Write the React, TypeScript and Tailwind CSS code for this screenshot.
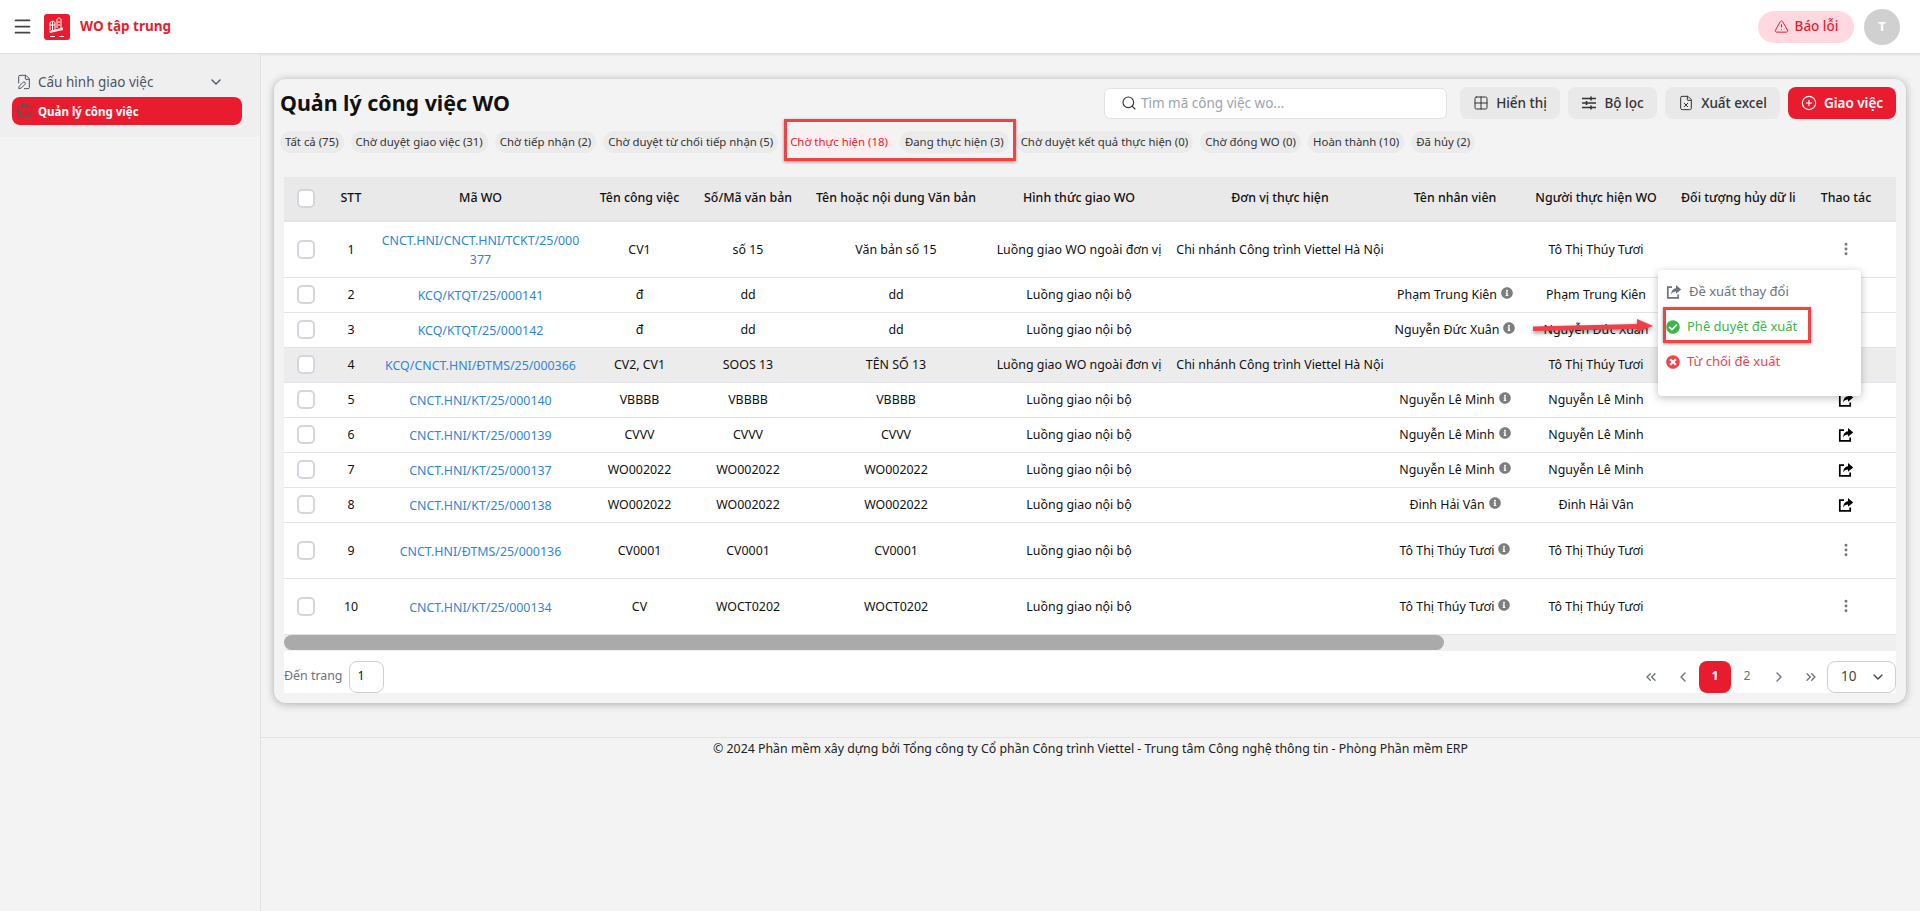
import React from "react";
import {
  Menu, ChevronDown, FilePen, BriefcaseBusiness, Search, Grid2x2, FileX, CirclePlus,
  TriangleAlert, ChevronsLeft, ChevronLeft, ChevronRight, ChevronsRight, EllipsisVertical,
} from "lucide-react";
import { FaInfoCircle, FaCheckCircle, FaTimesCircle } from "react-icons/fa";

type Row = { id: string[]; cv: string; so: string; nd: string; ht: string; dv?: string; nv?: string; nth: string; act: "dots" | "share" | "none"; h: string; grey?: boolean };
const NB = "Luồng giao nội bộ";
const NG = "Luồng giao WO ngoài đơn vị";
const CN = "Chi nhánh Công trình Viettel Hà Nội";
const TT = "Tô Thị Thúy Tươi";
const rows: Row[] = [
  { id: ["CNCT.HNI/CNCT.HNI/TCKT/25/000", "377"], cv: "CV1", so: "số 15", nd: "Văn bản số 15", ht: NG, dv: CN, nth: TT, act: "dots", h: "h-[56px]" },
  { id: ["KCQ/KTQT/25/000141"], cv: "đ", so: "dd", nd: "dd", ht: NB, nv: "Phạm Trung Kiên", nth: "Phạm Trung Kiên", act: "none", h: "h-[35px]" },
  { id: ["KCQ/KTQT/25/000142"], cv: "đ", so: "dd", nd: "dd", ht: NB, nv: "Nguyễn Đức Xuân", nth: "Nguyễn Đức Xuân", act: "none", h: "h-[35px]" },
  { id: ["KCQ/CNCT.HNI/ĐTMS/25/000366"], cv: "CV2, CV1", so: "SOOS 13", nd: "TÊN SỐ 13", ht: NG, dv: CN, nth: TT, act: "none", h: "h-[35px]", grey: true },
  { id: ["CNCT.HNI/KT/25/000140"], cv: "VBBBB", so: "VBBBB", nd: "VBBBB", ht: NB, nv: "Nguyễn Lê Minh", nth: "Nguyễn Lê Minh", act: "share", h: "h-[35px]" },
  { id: ["CNCT.HNI/KT/25/000139"], cv: "CVVV", so: "CVVV", nd: "CVVV", ht: NB, nv: "Nguyễn Lê Minh", nth: "Nguyễn Lê Minh", act: "share", h: "h-[35px]" },
  { id: ["CNCT.HNI/KT/25/000137"], cv: "WO002022", so: "WO002022", nd: "WO002022", ht: NB, nv: "Nguyễn Lê Minh", nth: "Nguyễn Lê Minh", act: "share", h: "h-[35px]" },
  { id: ["CNCT.HNI/KT/25/000138"], cv: "WO002022", so: "WO002022", nd: "WO002022", ht: NB, nv: "Đinh Hải Vân", nth: "Đinh Hải Vân", act: "share", h: "h-[35px]" },
  { id: ["CNCT.HNI/ĐTMS/25/000136"], cv: "CV0001", so: "CV0001", nd: "CV0001", ht: NB, nv: TT, nth: TT, act: "dots", h: "h-[56px]" },
  { id: ["CNCT.HNI/KT/25/000134"], cv: "CV", so: "WOCT0202", nd: "WOCT0202", ht: NB, nv: TT, nth: TT, act: "dots", h: "h-[56px]" },
];
const tabs = ["Tất cả (75)", "Chờ duyệt giao việc (31)", "Chờ tiếp nhận (2)", "Chờ duyệt từ chối tiếp nhận (5)", "Chờ thực hiện (18)", "Đang thực hiện (3)", "Chờ duyệt kết quả thực hiện (0)", "Chờ đóng WO (0)", "Hoàn thành (10)", "Đã hủy (2)"];
const widths = ["w-[44px]", "w-[46px]", "w-[213px]", "w-[105px]", "w-[112px]", "w-[184px]", "w-[182px]", "w-[220px]", "w-[130px]", "w-[152px]", "w-[124px]", "w-[100px]"];
const heads = ["STT", "Mã WO", "Tên công việc", "Số/Mã văn bản", "Tên hoặc nội dung Văn bản", "Hình thức giao WO", "Đơn vị thực hiện", "Tên nhân viên", "Người thực hiện WO"];

function Check() {
  return <span className="block mx-auto w-[18px] h-[19px] rounded-[5px] border-2 border-[#d3d7dd] bg-white" />;
}

function ShareIcon({ className }: { className?: string }) {
  return (
    <svg width="16" height="16" viewBox="0 0 16 16" className={className}>
      <path d="M6 3.2H1.8v10.6h10.4V10.5" fill="none" stroke="currentColor" strokeWidth="1.7" />
      <path d="M10 1l5.2 4.4L10 9.8V7.4c-2.4 0-3.8.8-4.8 3 0-3.6 2-5.9 4.8-6.2z" fill="currentColor" />
    </svg>
  );
}

function FilterIcon() {
  return (
    <svg width="16" height="16" viewBox="0 0 16 16" fill="none" stroke="currentColor" strokeWidth="1.3">
      <path d="M1 3.5h14M1 8h14M1 12.5h14" />
      <path d="M10 1.5v4M5.5 6v4M10 10.5v4" strokeWidth="1.6" />
    </svg>
  );
}

function Logo() {
  return (
    <svg width="26" height="26" viewBox="0 0 26 26" className="shrink-0">
      <rect width="26" height="26" rx="3" fill="#e91c2f" />
      <g fill="none" stroke="#fff" strokeWidth="1">
        <path d="M6 16V8.5l3-1.5 2 1.5V16" />
        <path d="M13 14V5.5l2-2 2 2V14" />
        <path d="M6 11h5M8.5 8v8M14 8h2M14 11h2" />
      </g>
      <path d="M5 17l14-3.5v2.5L6 19z" fill="#fff" opacity="0.9" />
      <path d="M6 22.5h5M15 22.5h5" stroke="#fff" strokeWidth="1.2" />
    </svg>
  );
}

function ToolBtn({ icon, label, w }: { icon: React.ReactNode; label: string; w: string }) {
  return (
    <button className={`${w} h-[32px] rounded-lg bg-[#e9e9e9] text-[#333] text-[13.5px] font-medium flex items-center justify-center gap-[7px]`}>
      {icon}{label}
    </button>
  );
}

export default function App() {
  return (
    <div className="relative min-h-screen bg-[#f3f3f3] text-[#111] text-[12.4px] font-['Noto_Sans',sans-serif] overflow-hidden">
      <header className="h-[54px] bg-white border-b border-[#dedede] shadow-[0_1px_2px_rgba(0,0,0,0.08)] flex items-center pl-[12px] pr-[20px]">
        <Menu size={21} strokeWidth={2} className="text-[#444]" />
        <div className="ml-[11px]"><Logo /></div>
        <span className="ml-[10px] text-[13.5px] font-bold text-[#e91c2f]">WO tập trung</span>
        <div className="ml-auto flex items-center gap-[10px]">
          <button className="w-[96px] h-[32px] rounded-full bg-[#ffd9df] text-[#e91c2f] text-[13.5px] font-medium flex items-center justify-center gap-[6px]">
            <TriangleAlert size={15} strokeWidth={1.6} />Báo lỗi
          </button>
          <div className="w-[36px] h-[36px] rounded-full bg-[#d0d0d0] text-white font-bold text-[13px] flex items-center justify-center">T</div>
        </div>
      </header>

      <div className="flex">
        <aside className="w-[261px] min-h-[857px] shrink-0 border-r border-[#e2e2e2]">
          <div className="h-[83px] bg-[#efefef] pl-[12px] pr-[18px] pt-[14px]">
            <div className="h-[28px] mb-[1px] flex items-center pl-[4px] pr-[18px] text-[#4b5563] text-[13.5px]">
              <FilePen size={16} strokeWidth={1.5} />
              <span className="ml-[6px]">Cấu hình giao việc</span>
              <ChevronDown size={16} strokeWidth={2} className="ml-auto" />
            </div>
            <div className="h-[28px] rounded-lg bg-[#e91c2f] flex items-center pl-[5px] text-white text-[11.5px] font-bold">
              <BriefcaseBusiness size={16} strokeWidth={1.6} className="text-[#555]" />
              <span className="ml-[5px] pt-[1px]">Quản lý công việc</span>
            </div>
          </div>
        </aside>

        <main className="flex-1 min-w-0">
          <div className="mt-[25px] ml-[13px] mr-[14px] rounded-xl bg-[#f3f3f3] shadow-[0_1px_8px_rgba(0,0,0,0.3)] pl-[6px] pr-[10px] pt-[8px] pb-[10px]">
            <div className="flex items-center h-[32px]">
              <h1 className="text-[21.4px] font-bold text-[#111]">Quản lý công việc WO</h1>
              <div className="ml-auto w-[343px] h-[31px] rounded-md border border-[#e1e1e8] bg-white flex items-center pl-[16px] text-[#9ca3af] text-[13.5px]">
                <Search size={16} strokeWidth={1.7} className="text-[#333] mr-[4px]" />Tìm mã công việc wo...
              </div>
              <div className="ml-[13px] flex gap-[8px]">
                <ToolBtn w="w-[100px]" label="Hiển thị" icon={<Grid2x2 size={16} strokeWidth={1.5} />} />
                <ToolBtn w="w-[89px]" label="Bộ lọc" icon={<FilterIcon />} />
                <ToolBtn w="w-[115px]" label="Xuất excel" icon={<FileX size={16} strokeWidth={1.5} />} />
                <button className="w-[108px] h-[32px] rounded-lg bg-[#e91c2f] text-white text-[13.5px] font-semibold flex items-center justify-center gap-[7px]">
                  <CirclePlus size={16} strokeWidth={1.7} />Giao việc
                </button>
              </div>
            </div>

            <div className="mt-[12px] flex gap-[7px] h-[22px]">
              {tabs.map((t, i) => (
                <span key={t} className={`h-[22px] px-[5px] rounded-full flex items-center whitespace-nowrap text-[11.4px] ${i === 4 ? "bg-[#fdeef0] text-[#e91c2f]" : "bg-[#ebebeb] text-[#333]"}`}>{t}</span>
              ))}
            </div>

            <div className="mt-[24px] ml-[4px] bg-white">
              <table className="w-full table-fixed border-collapse">
                <colgroup>{widths.map((w, i) => <col key={i} className={w} />)}</colgroup>
                <thead>
                  <tr className="h-[44px] bg-[#e9e9e9] border-b-2 border-[#e2e2e8]">
                    <th><Check /></th>
                    {heads.map((h) => <th key={h} className="font-medium text-center whitespace-nowrap">{h}</th>)}
                    <th className="font-medium"><div className="pl-[9px] text-left whitespace-nowrap overflow-hidden">Đối tượng hủy dữ liệu</div></th>
                    <th className="font-medium text-center">Thao tác</th>
                  </tr>
                </thead>
                <tbody>
                  {rows.map((r, i) => (
                    <tr key={i} className={`${r.h} border-b border-[#e2e2e8] text-center [&>td:not(:first-child)]:pt-[2px] ${r.grey ? "bg-[#ececec]" : ""}`}>
                      <td><Check /></td>
                      <td>{i + 1}</td>
                      <td className="text-[#2f86d6] leading-[19px]">{r.id.map((l) => <div key={l}>{l}</div>)}</td>
                      <td className="whitespace-nowrap">{r.cv}</td>
                      <td className="whitespace-nowrap">{r.so}</td>
                      <td className="whitespace-nowrap">{r.nd}</td>
                      <td className="whitespace-nowrap">{r.ht}</td>
                      <td className="whitespace-nowrap">{r.dv}</td>
                      <td className="whitespace-nowrap">
                        {r.nv && (
                          <span className="inline-flex items-center gap-[4px]">{r.nv}<FaInfoCircle size={12} className="text-[#7d7d7d] -mt-[4px]" /></span>
                        )}
                      </td>
                      <td className="whitespace-nowrap">{r.nth}</td>
                      <td></td>
                      <td>
                        {r.act === "dots" && <EllipsisVertical size={16} strokeWidth={2.4} className="mx-auto -mt-[2px] text-[#777]" />}
                        {r.act === "share" && <ShareIcon className="mx-auto -mt-[2px] text-black" />}
                      </td>
                    </tr>
                  ))}
                </tbody>
              </table>
              <div className="h-[16px] bg-[#efefef]">
                <div className="w-[1160px] h-[15px] rounded-[8px] bg-[#aaaaaa]" />
              </div>
              <div className="h-[42px] pt-[10px] flex items-center text-[#6b7280]">
                <span>Đến trang</span>
                <div className="ml-[7px] w-[35px] h-[32px] rounded-lg border border-[#cfcfcf] flex items-center pl-[7px] text-[#111]">1</div>
                <div className="ml-auto flex items-center text-[#6b7280]">
                  <span className="w-[32px] flex justify-center"><ChevronsLeft size={16} /></span>
                  <span className="w-[32px] flex justify-center"><ChevronLeft size={16} /></span>
                  <span className="w-[32px] h-[32px] rounded-lg bg-[#e91c2f] text-white font-bold flex items-center justify-center">1</span>
                  <span className="w-[32px] flex justify-center">2</span>
                  <span className="w-[32px] flex justify-center"><ChevronRight size={16} /></span>
                  <span className="w-[32px] flex justify-center"><ChevronsRight size={16} /></span>
                  <div className="w-[69px] h-[32px] rounded-lg border border-[#cfcfcf] flex items-center justify-between pl-[13px] pr-[9px] text-[#444] text-[13.5px]">10<ChevronDown size={16} /></div>
                </div>
              </div>
            </div>
          </div>

          <footer className="mt-[34px] border-t border-[#e2e2e8] pt-[2px] text-center text-[12.36px] text-[#222]">
            © 2024 Phần mềm xây dựng bởi Tổng công ty Cổ phần Công trình Viettel - Trung tâm Công nghệ thông tin - Phòng Phần mềm ERP
          </footer>
        </main>
      </div>

      {/* dropdown menu */}
      <div className="absolute left-[1658px] top-[270px] w-[203px] h-[126px] rounded bg-white shadow-[0_2px_8px_rgba(0,0,0,0.25)] text-[13px]">
        <div className="flex flex-col pl-[8px] pt-[11px] gap-[13px]">
          <div className="h-[22px] flex items-center gap-[7px] text-[#6b7280]"><ShareIcon />Đề xuất thay đổi</div>
          <div className="h-[22px] flex items-center gap-[7px] text-[#3cb54a]"><FaCheckCircle size={14} />Phê duyệt đề xuất</div>
          <div className="h-[22px] flex items-center gap-[7px] text-[#f0434a]"><FaTimesCircle size={14} />Từ chối đề xuất</div>
        </div>
      </div>

      {/* annotations */}
      <div className="absolute left-[784px] top-[119px] w-[232px] h-[42px] border-[3px] border-[#ef4444] shadow-[0_1px_3px_rgba(0,0,0,0.4)]" />
      <div className="absolute left-[1663px] top-[307px] w-[148px] h-[36px] border-[3px] border-[#ef4444] shadow-[0_1px_3px_rgba(0,0,0,0.4)]" />
      <svg className="absolute left-[1530px] top-[314px] drop-shadow-[0_2px_2px_rgba(0,0,0,0.45)]" width="126" height="24" viewBox="0 0 126 24">
        <path d="M3 12.5 L107 10 L107 5 L123 12 L107 18 L107 15 L3 17 Z" fill="#ef3f48" />
      </svg>
    </div>
  );
}
